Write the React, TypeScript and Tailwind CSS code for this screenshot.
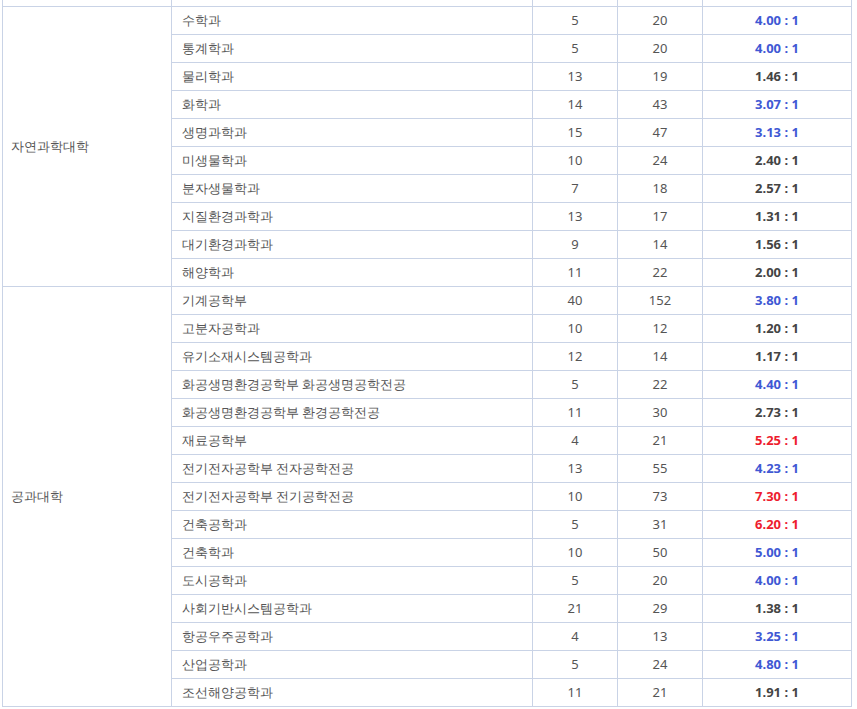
const B = '#4058d4';
const D = '#444444';
const R = '#ee1c2e';

type Row = [string, number, number, string, string];

const groups: { name: string; rows: Row[] }[] = [
  {
    name: '자연과학대학',
    rows: [
      ['수학과', 5, 20, '4.00', B],
      ['통계학과', 5, 20, '4.00', B],
      ['물리학과', 13, 19, '1.46', D],
      ['화학과', 14, 43, '3.07', B],
      ['생명과학과', 15, 47, '3.13', B],
      ['미생물학과', 10, 24, '2.40', D],
      ['분자생물학과', 7, 18, '2.57', D],
      ['지질환경과학과', 13, 17, '1.31', D],
      ['대기환경과학과', 9, 14, '1.56', D],
      ['해양학과', 11, 22, '2.00', D],
    ],
  },
  {
    name: '공과대학',
    rows: [
      ['기계공학부', 40, 152, '3.80', B],
      ['고분자공학과', 10, 12, '1.20', D],
      ['유기소재시스템공학과', 12, 14, '1.17', D],
      ['화공생명환경공학부 화공생명공학전공', 5, 22, '4.40', B],
      ['화공생명환경공학부 환경공학전공', 11, 30, '2.73', D],
      ['재료공학부', 4, 21, '5.25', R],
      ['전기전자공학부 전자공학전공', 13, 55, '4.23', B],
      ['전기전자공학부 전기공학전공', 10, 73, '7.30', R],
      ['건축공학과', 5, 31, '6.20', R],
      ['건축학과', 10, 50, '5.00', B],
      ['도시공학과', 5, 20, '4.00', B],
      ['사회기반시스템공학과', 21, 29, '1.38', D],
      ['항공우주공학과', 4, 13, '3.25', B],
      ['산업공학과', 5, 24, '4.80', B],
      ['조선해양공학과', 11, 21, '1.91', D],
    ],
  },
];

const td = 'border border-[#c9d3e6] h-[28px] p-0';

export default function App() {
  return (
    <div className="bg-white w-[857px] h-[709px] overflow-hidden pl-[2px] text-[13px] text-[#555] font-['Noto_Sans_CJK_KR','Noto_Sans',sans-serif]">
      <table className="border-collapse table-fixed w-[849px] -mt-[22px]">
        <colgroup>
          <col className="w-[169px]" />
          <col className="w-[361px]" />
          <col className="w-[85px]" />
          <col className="w-[85px]" />
          <col className="w-[149px]" />
        </colgroup>
        <tbody>
          <tr>
            <td className={td}></td>
            <td className={td}></td>
            <td className={td}></td>
            <td className={td}></td>
            <td className={td}></td>
          </tr>
          {groups.map((g) =>
            g.rows.map((r, i) => (
              <tr key={g.name + r[0]}>
                {i === 0 && (
                  <td rowSpan={g.rows.length} className={`${td} pl-[8px] align-middle`}>
                    {g.name}
                  </td>
                )}
                <td className={`${td} pl-[10px]`}>{r[0]}</td>
                <td className={`${td} text-center`}>{r[1]}</td>
                <td className={`${td} text-center`}>{r[2]}</td>
                <td className={`${td} text-center font-bold`} style={{ color: r[4] }}>
                  {r[3]} : 1
                </td>
              </tr>
            ))
          )}
        </tbody>
      </table>
    </div>
  );
}
